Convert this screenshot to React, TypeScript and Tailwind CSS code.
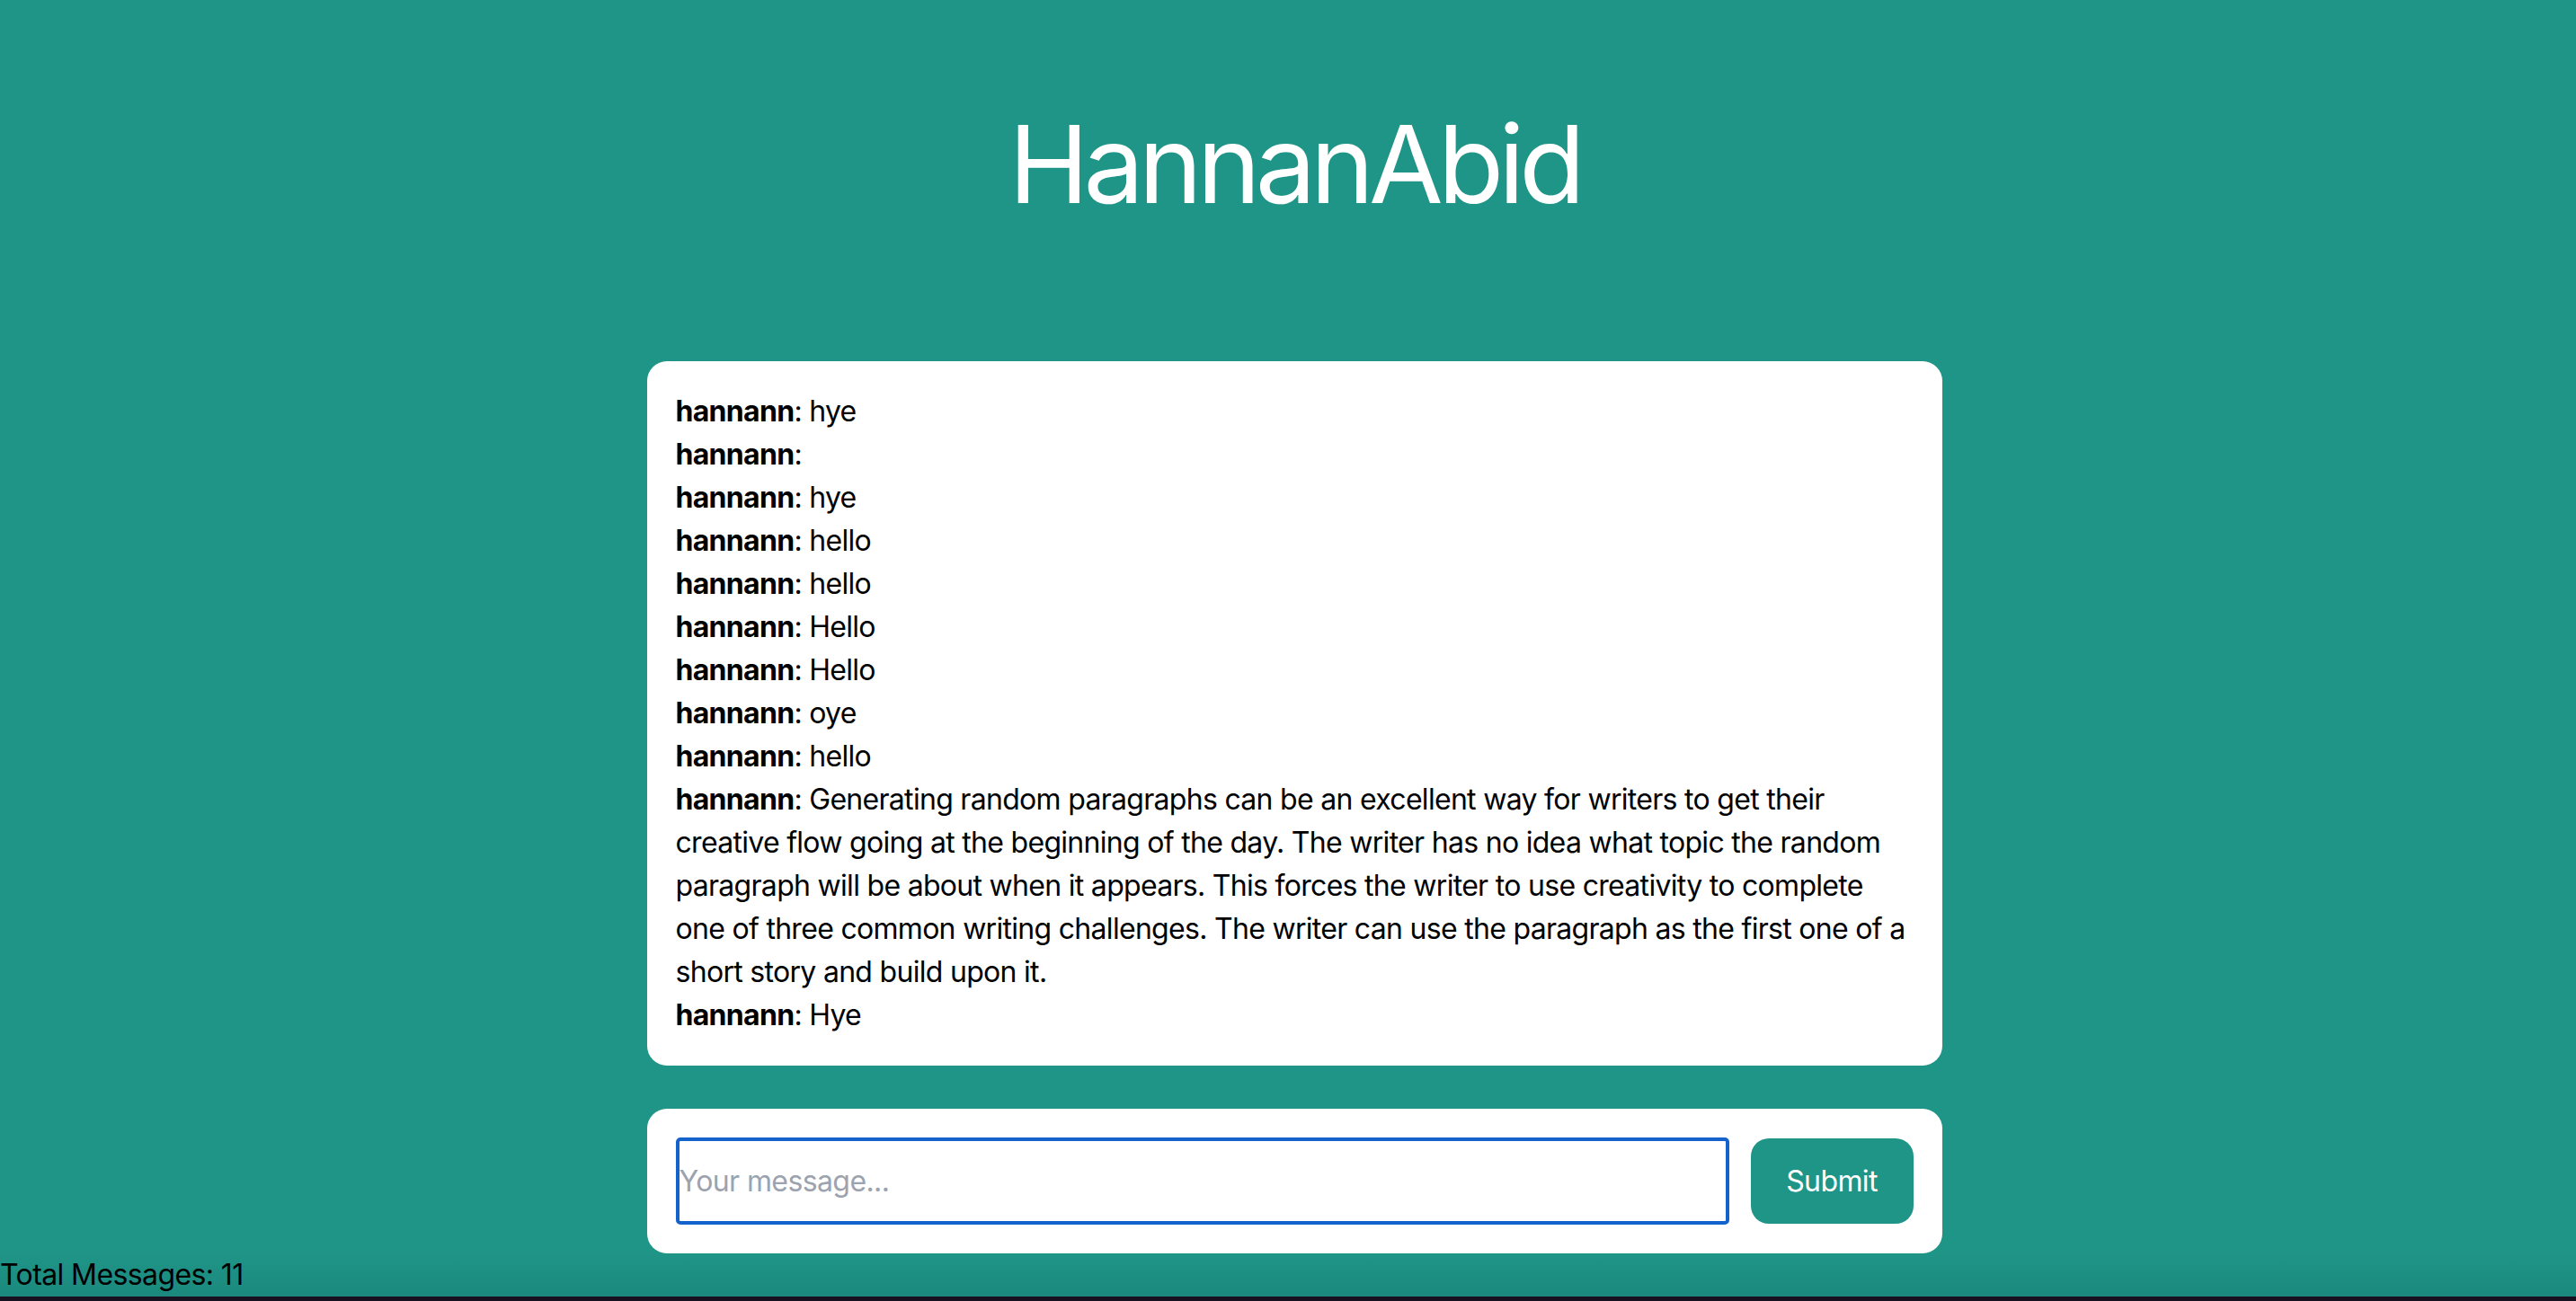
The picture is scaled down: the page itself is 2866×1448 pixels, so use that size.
import React from "react";

const messages = [
  "hye",
  "",
  "hye",
  "hello",
  "hello",
  "Hello",
  "Hello",
  "oye",
  "hello",
  "Generating random paragraphs can be an excellent way for writers to get their creative flow going at the beginning of the day. The writer has no idea what topic the random paragraph will be about when it appears. This forces the writer to use creativity to complete one of three common writing challenges. The writer can use the paragraph as the first one of a short story and build upon it.",
  "Hye",
];

const App = () => {
  return (
    <div className="h-[1448px] w-full bg-[#1f9587] flex flex-col font-['Inter','Liberation_Sans',sans-serif] overflow-hidden">
      <div className="pl-[14px] flex flex-col">
        <h1 className="pt-[123px] text-center text-white text-[120px] leading-none font-normal tracking-[-6px]">
          HannanAbid
        </h1>

        <div className="mx-auto mt-[159px] w-[1441px] bg-white rounded-[22px] p-8 text-[32px] leading-[48px] tracking-[-0.7px] text-black">
          {messages.map((msg, i) => (
            <div key={i}>
              <span className="font-bold">hannann</span>: {msg}
            </div>
          ))}
        </div>

        <form
          className="mx-auto mt-12 w-[1441px] bg-white rounded-[22px] p-8 flex items-center gap-6"
          onSubmit={(e) => e.preventDefault()}
        >
          <input
            type="text"
            placeholder="Your message..."
            className="flex-1 h-[97px] border-[4px] border-[#1463cc] rounded-[5px] text-[32px] tracking-[-0.6px] text-black placeholder:text-[#9ca3af] outline-none"
          />
          <button
            type="submit"
            className="h-[95px] w-[181px] bg-[#1f9587] text-white text-[32px] tracking-[-0.6px] rounded-[20px]"
          >
            Submit
          </button>
        </form>
      </div>

      <div className="flex-1 flex items-end bg-gradient-to-b from-[#1f9587] to-[#1b897d]">
        <span className="text-[32px] leading-[48px] tracking-[-0.6px] text-black">Total Messages: 11</span>
      </div>
      <div className="h-[7px] bg-[#17111f]" />
    </div>
  );
};

export default App;
